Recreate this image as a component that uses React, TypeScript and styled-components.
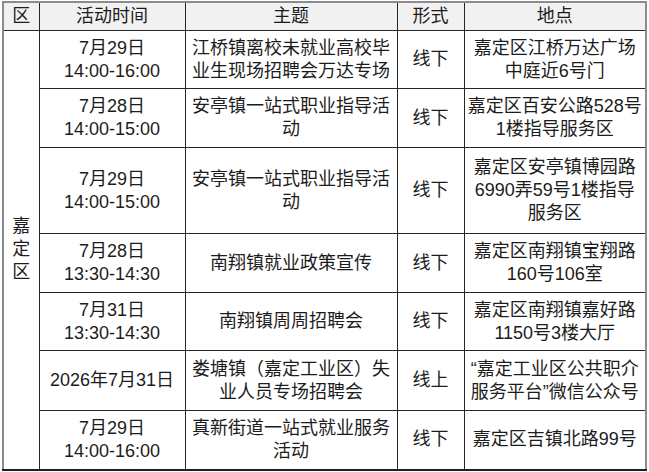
import React from 'react';
import styled, { createGlobalStyle } from 'styled-components';

const GlobalStyle = createGlobalStyle`
  html, body {
    margin: 0;
    padding: 0;
    background: #ffffff;
  }
  body {
    font-family: "Liberation Sans", "Noto Sans CJK SC", sans-serif;
    color: #1c1c1c;
  }
`;

const Page = styled.div`
  padding: 1px 0 0 2px;
`;

const Table = styled.table`
  border-collapse: collapse;
  table-layout: fixed;
  width: 643px;
  border: 2px solid #8c8c8c;
  border-bottom: 2px solid #1e1e1e;
  font-size: 18px;
  line-height: 23px;
`;

const Col = styled.col<{ $w: number }>`
  width: ${p => p.$w}px;
`;

type Edge = 'left' | 'right' | undefined;

const HeadCell = styled.th<{ $edge?: Edge }>`
  height: 27px;
  padding: 0;
  background: #f1f1f1;
  border: 1px solid #262626;
  border-top: none;
  ${p => p.$edge === 'left' && 'border-left: none;'}
  ${p => p.$edge === 'right' && 'border-right: none;'}
  font-weight: normal;
  text-align: center;
  vertical-align: middle;
`;

const Row = styled.tr<{ $h: number }>`
  height: ${p => p.$h}px;
`;

const Cell = styled.td<{ $edge?: Edge }>`
  padding: 0 2px;
  border: 1px solid #262626;
  ${p => p.$edge === 'left' && 'border-left: none;'}
  ${p => p.$edge === 'right' && 'border-right: none;'}
  text-align: center;
  vertical-align: middle;
  white-space: nowrap;
`;

const DistrictCell = styled(Cell)`
  padding: 0;
`;

const Line = styled.div`
  display: block;
`;

interface EventRow {
  height: number;
  time: string[];
  topic: string[];
  mode: string;
  place: string[];
}

const columns = [
  { title: '区', width: 36 },
  { title: '活动时间', width: 146 },
  { title: '主题', width: 212 },
  { title: '形式', width: 67 },
  { title: '地点', width: 182 },
];

const rows: EventRow[] = [
  { height: 58, time: ['7月29日', '14:00-16:00'], topic: ['江桥镇离校未就业高校毕', '业生现场招聘会万达专场'], mode: '线下', place: ['嘉定区江桥万达广场', '中庭近6号门'] },
  { height: 59, time: ['7月28日', '14:00-15:00'], topic: ['安亭镇一站式职业指导活', '动'], mode: '线下', place: ['嘉定区百安公路528号', '1楼指导服务区'] },
  { height: 86, time: ['7月29日', '14:00-15:00'], topic: ['安亭镇一站式职业指导活', '动'], mode: '线下', place: ['嘉定区安亭镇博园路', '6990弄59号1楼指导', '服务区'] },
  { height: 59, time: ['7月28日', '13:30-14:30'], topic: ['南翔镇就业政策宣传'], mode: '线下', place: ['嘉定区南翔镇宝翔路', '160号106室'] },
  { height: 58, time: ['7月31日', '13:30-14:30'], topic: ['南翔镇周周招聘会'], mode: '线下', place: ['嘉定区南翔镇嘉好路', '1150号3楼大厅'] },
  { height: 60, time: ['2026年7月31日'], topic: ['娄塘镇（嘉定工业区）失', '业人员专场招聘会'], mode: '线上', place: ['“嘉定工业区公共职介', '服务平台”微信公众号'] },
  { height: 59, time: ['7月29日', '14:00-16:00'], topic: ['真新街道一站式就业服务', '活动'], mode: '线下', place: ['嘉定区吉镇北路99号'] },
];

const Lines: React.FC<{ items: string[] }> = ({ items }) => (
  <>
    {items.map((t, i) => <Line key={i}>{t}</Line>)}
  </>
);

const edgeOf = (i: number, n: number): Edge =>
  i === 0 ? 'left' : i === n - 1 ? 'right' : undefined;

export default function App() {
  return (
    <Page>
      <GlobalStyle />
      <Table>
        <colgroup>
          {columns.map(c => <Col key={c.title} $w={c.width} />)}
        </colgroup>
        <thead>
          <tr>
            {columns.map((c, i) => (
              <HeadCell key={c.title} $edge={edgeOf(i, columns.length)}>{c.title}</HeadCell>
            ))}
          </tr>
        </thead>
        <tbody>
          {rows.map((r, i) => (
            <Row key={i} $h={r.height}>
              {i === 0 && (
                <DistrictCell rowSpan={rows.length} $edge="left">
                  <Lines items={['嘉', '定', '区']} />
                </DistrictCell>
              )}
              <Cell><Lines items={r.time} /></Cell>
              <Cell><Lines items={r.topic} /></Cell>
              <Cell>{r.mode}</Cell>
              <Cell $edge="right"><Lines items={r.place} /></Cell>
            </Row>
          ))}
        </tbody>
      </Table>
    </Page>
  );
}
